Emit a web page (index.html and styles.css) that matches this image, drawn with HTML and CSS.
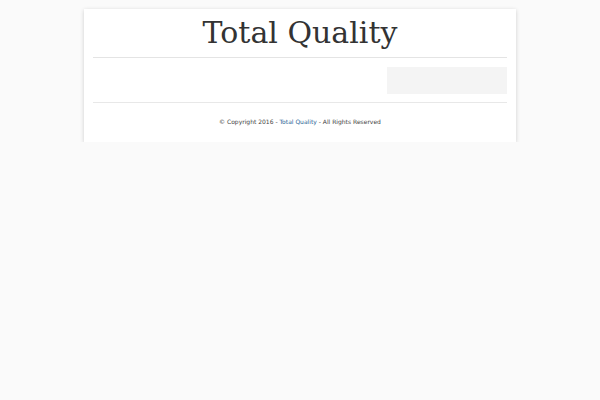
FILE: index.html
```html
<!DOCTYPE html>
<html>
<head>
<meta charset="utf-8">
<link rel="stylesheet" href="styles.css">
</head>
<body>
<div class="card">
  <header class="head">
    <h1 class="title">Total Quality</h1>
  </header>
  <div class="main">
    <div class="search"></div>
  </div>
  <footer class="foot">
    © Copyright 2016 - <a class="link" href="#">Total Quality</a> - All Rights Reserved
  </footer>
</div>
</body>
</html>
```
FILE: styles.css
```css
html, body {
  margin: 0;
  padding: 0;
  background: #fafafa;
}
body {
  font-family: "DejaVu Sans", sans-serif;
  padding-top: 9px;
}
.card {
  width: 414px;
  margin: 0 auto;
  background: #fff;
  padding: 6px 9px 0;
  box-shadow: 0 1px 4px rgba(0,0,0,0.18);
}
.head {
  border-bottom: 1px solid #e4e4e4;
  padding-bottom: 7px;
}
.title {
  margin: 0;
  font-family: "DejaVu Serif", serif;
  font-weight: normal;
  font-size: 30px;
  line-height: 35px;
  text-align: center;
  color: #333;
}
.main {
  display: flex;
  justify-content: flex-end;
  padding: 9px 0 8px;
  border-bottom: 1px solid #e8e8e8;
}
.search {
  width: 120px;
  height: 27px;
  background: #f4f4f4;
}
.foot {
  text-align: center;
  font-size: 6px;
  color: #444;
  padding: 14px 0 15px;
  line-height: 10px;
}
.link {
  color: #2a6496;
  text-decoration: none;
}
```
